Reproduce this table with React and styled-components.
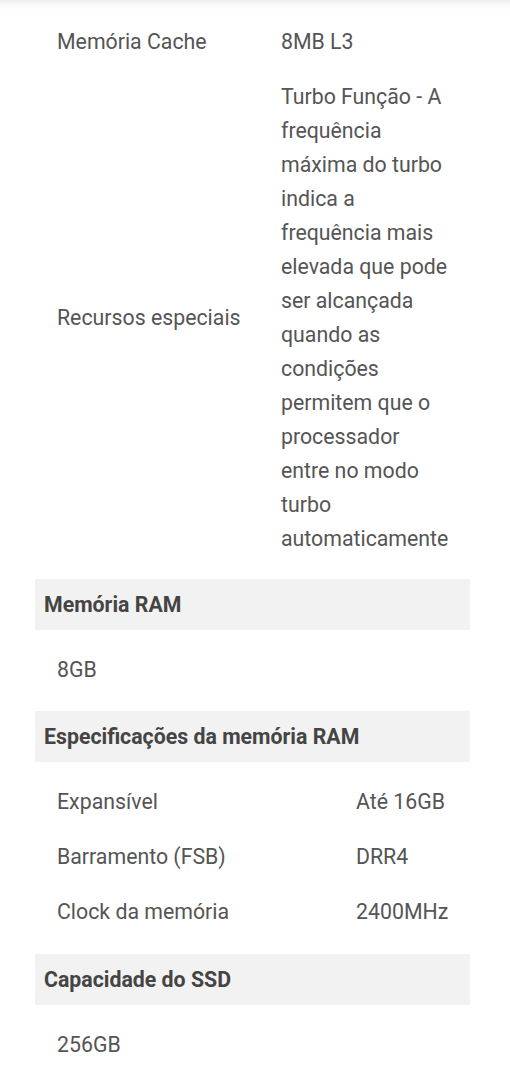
import React from 'react';
import styled, { createGlobalStyle } from 'styled-components';

const GlobalStyle = createGlobalStyle`
  html, body {
    margin: 0;
    padding: 0;
    background: #fff;
  }
  body {
    font-family: Roboto, "Noto Sans", Arial, sans-serif;
    color: #555;
  }
`;

const Page = styled.div`
  min-height: 1080px;
  padding: 0 40px 0 35px;
  background: linear-gradient(to bottom, #efefef 0px, #fafafa 5px, #fff 10px) no-repeat;
  background-size: 100% 10px;
`;

const Section = styled.section`
  display: flex;
  flex-direction: column;
`;

const Heading = styled.h3`
  margin: 0;
  height: 51px;
  padding: 0 9px;
  display: flex;
  align-items: center;
  background: #f2f2f2;
  font-size: 21.3px;
  font-weight: 700;
  color: #444;
`;

const Body = styled.div`
  padding: ${p => p.$top ?? 12.5}px 0 ${p => p.$bottom ?? 14}px;
`;

const Row = styled.div`
  display: grid;
  grid-template-columns: ${p => p.$label}px 1fr;
  align-items: center;
  padding: 10.5px 20px 10.5px 22px;
  font-size: 21.3px;
  line-height: 34px;
  color: #555;
`;

const Label = styled.div``;

const Value = styled.div``;

const Single = styled.div`
  padding: 10.5px 22px;
  font-size: 21.3px;
  line-height: 34px;
  color: #555;
`;

export default function App() {
  return (
    <Page>
      <GlobalStyle />
      <Section>
        <Body $top={14.5} $bottom={12}>
          <Row $label={224}>
            <Label>Memória Cache</Label>
            <Value>8MB L3</Value>
          </Row>
          <Row $label={224}>
            <Label>Recursos especiais</Label>
            <Value>
              Turbo Função - A frequência máxima do turbo indica a frequência mais elevada que pode ser
              alcançada quando as condições permitem que o processador entre no modo turbo
              automaticamente
            </Value>
          </Row>
        </Body>
      </Section>

      <Section>
        <Heading>Memória RAM</Heading>
        <Body>
          <Single>8GB</Single>
        </Body>
      </Section>

      <Section>
        <Heading>Especificações da memória RAM</Heading>
        <Body>
          <Row $label={299}>
            <Label>Expansível</Label>
            <Value>Até 16GB</Value>
          </Row>
          <Row $label={299}>
            <Label>Barramento (FSB)</Label>
            <Value>DRR4</Value>
          </Row>
          <Row $label={299}>
            <Label>Clock da memória</Label>
            <Value>2400MHz</Value>
          </Row>
        </Body>
      </Section>

      <Section>
        <Heading>Capacidade do SSD</Heading>
        <Body>
          <Single>256GB</Single>
        </Body>
      </Section>
    </Page>
  );
}
